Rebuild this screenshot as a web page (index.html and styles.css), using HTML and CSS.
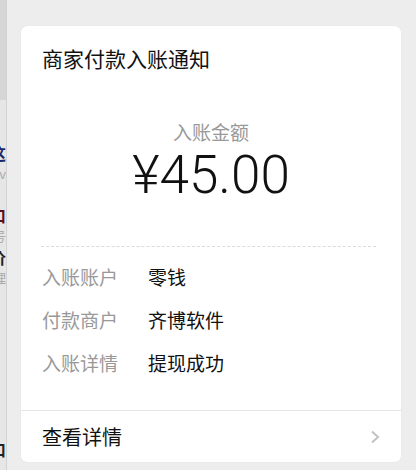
FILE: index.html
```html
<!DOCTYPE html>
<html>
<head>
  <meta charset="utf-8">
  <title>商家付款入账通知</title>
  <link rel="stylesheet" href="styles.css">
</head>
<body>

  <div class="side-strip">
    <div class="side-top"></div>
    <div class="side-list">
      <div class="frag dark blue">这</div>
      <div class="frag light">v</div>
      <div class="frag dark red">口</div>
      <div class="frag light">号</div>
      <div class="frag dark">价</div>
      <div class="frag light">理</div>
      <div class="frag spacer"></div>
      <div class="frag dark">口</div>
    </div>
  </div>

  <div class="chat">
    <div class="time-bar">
      <span class="time">15:26</span>
    </div>

    <div class="card">
      <div class="card-title">商家付款入账通知</div>

      <div class="amount-block">
        <div class="amount-label">入账金额</div>
        <div class="amount">¥45.00</div>
      </div>

      <div class="divider"></div>

      <div class="info">
        <div class="info-row">
          <span class="info-key">入账账户</span>
          <span class="info-val">零钱</span>
        </div>
        <div class="info-row">
          <span class="info-key">付款商户</span>
          <span class="info-val">齐博软件</span>
        </div>
        <div class="info-row">
          <span class="info-key">入账详情</span>
          <span class="info-val">提现成功</span>
        </div>
      </div>

      <div class="card-footer">
        <span>查看详情</span>
        <svg class="chevron" width="11" height="14" viewBox="0 0 11 14">
          <path d="M2 1.5 L8 7 L2 12.5" fill="none" stroke="#c2c2c2" stroke-width="2"/>
        </svg>
      </div>
    </div>
  </div>

</body>
</html>
```

FILE: styles.css
```css
body {
  font-family: "Noto Sans CJK SC", "Liberation Sans", sans-serif;
  background-color: #ededed;
  color: #111;
  margin: 0;
  padding: 0;
  display: flex;
  height: 470px;
  overflow: hidden;
}

.side-strip {
  width: 6px;
  flex-shrink: 0;
  background-color: #e6e6e6;
  border-right: 1px solid #d2d2d2;
  overflow: hidden;
}

.side-top {
  height: 100px;
  background-color: #d6d6d6;
}

.side-list {
  padding-top: 42px;
}

.frag {
  display: flex;
  justify-content: flex-end;
  white-space: nowrap;
  width: 6px;
}

.frag.dark {
  font-size: 16px;
  line-height: 22px;
  font-weight: bold;
  color: #222;
}

.frag.blue {
  color: #1d2a6e;
}

.frag.red {
  color: #5a0e1e;
  margin-top: 20px;
}

.frag.light {
  font-size: 13px;
  line-height: 20px;
  color: #aaa;
}

.frag.spacer {
  height: 150px;
}

.chat {
  flex: 1;
  padding: 0 15px 0 14px;
}

.time-bar {
  height: 26px;
  display: flex;
  justify-content: center;
  align-items: flex-end;
  overflow: hidden;
}

.time {
  font-family: "Liberation Sans", sans-serif;
  font-size: 14px;
  line-height: 14px;
  color: #b8b8b8;
  margin-bottom: 24px;
}

.card {
  background-color: #fff;
  border-radius: 6px;
  box-shadow: 0 0 1px rgba(0, 0, 0, 0.12);
  overflow: hidden;
}

.card-title {
  font-size: 21px;
  line-height: 30px;
  padding: 17px 21px 0 21px;
  color: #111;
}

.amount-block {
  text-align: center;
  margin-top: 46px;
}

.amount-label {
  font-size: 19px;
  line-height: 26px;
  color: #999;
}

.amount {
  font-family: Roboto, "Liberation Sans", sans-serif;
  font-weight: 300;
  font-size: 53px;
  line-height: 60px;
  color: #111;
  margin-top: 0;
}

.divider {
  margin: 41px 25px 0 20px;
  height: 0;
  border-top: 1px dashed #dcdcdc;
}

.info {
  padding: 8px 21px 26px 21px;
  border-bottom: 1px solid #e6e6e6;
}

.info-row {
  display: flex;
  height: 43px;
  align-items: center;
  font-size: 19px;
}

.info-key {
  width: 106px;
  color: #999;
}

.info-val {
  color: #111;
}

.card-footer {
  display: flex;
  justify-content: space-between;
  align-items: center;
  height: 51px;
  padding: 0 20px 0 21px;
  font-size: 20px;
  color: #111;
}

.chevron {
  display: block;
}
```
